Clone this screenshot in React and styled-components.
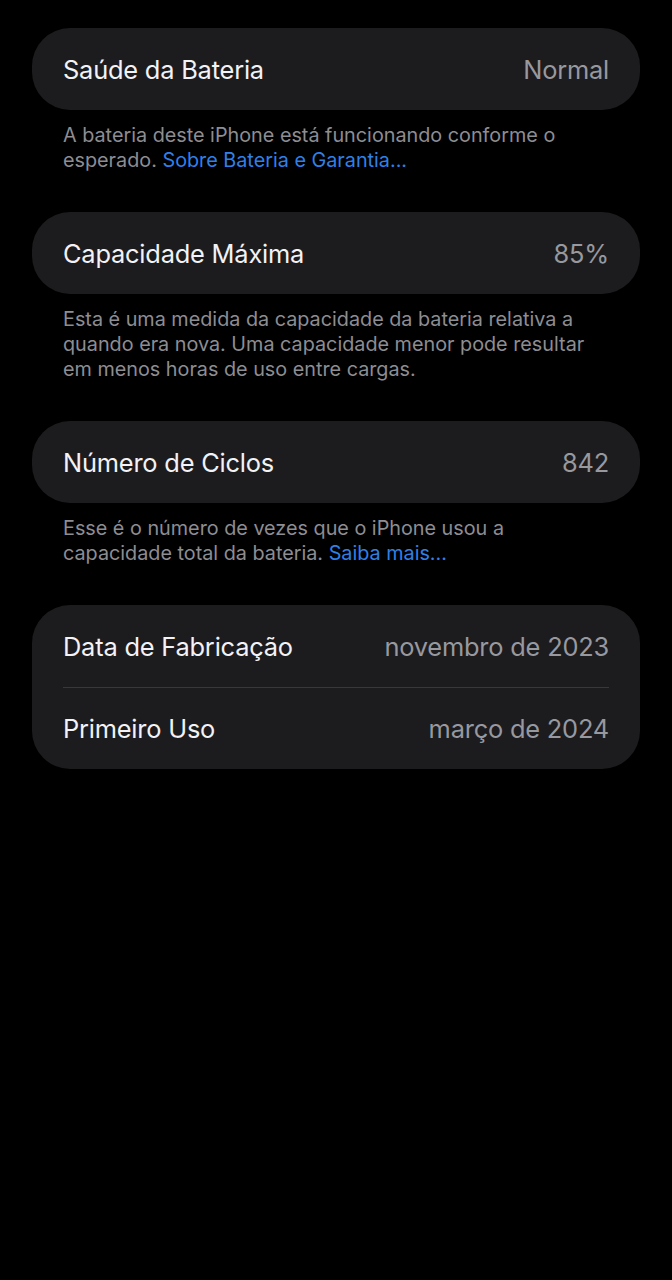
import React from "react";
import styled, { createGlobalStyle } from "styled-components";

const GlobalStyle = createGlobalStyle`
  html, body {
    margin: 0;
    padding: 0;
    background: #000;
  }
  body {
    font-family: Inter, Roboto, "Liberation Sans", sans-serif;
    -webkit-font-smoothing: antialiased;
  }
`;

const Page = styled.div`
  min-height: 1280px;
  background: #000;
  padding: 28px 32px 0;
  box-sizing: border-box;
`;

const Section = styled.section`
  margin-bottom: 39px;
`;

const Card = styled.div`
  background: #1c1c1e;
  border-radius: 38px;
  padding: 0 31px;
`;

const Row = styled.div`
  height: 82px;
  display: flex;
  align-items: center;
  justify-content: space-between;
  border-top: ${(p) => (p.$divided ? "1px solid #38383a" : "none")};
  box-sizing: border-box;
`;

const Label = styled.span`
  color: #f2f2f7;
  font-size: 25.4px;
  letter-spacing: -0.2px;
`;

const Value = styled.span`
  color: #98989f;
  font-size: 25.4px;
  letter-spacing: -0.2px;
`;

const Footer = styled.p`
  margin: 13px 0 0;
  padding: 0 31px;
  color: #8d8d93;
  font-size: 19.8px;
  line-height: 25px;
  letter-spacing: 0;
`;

const Link = styled.a`
  color: #2f80e8;
  text-decoration: none;
`;

export default function App() {
  return (
    <>
      <GlobalStyle />
      <Page>
        <Section>
          <Card>
            <Row>
              <Label>Saúde da Bateria</Label>
              <Value>Normal</Value>
            </Row>
          </Card>
          <Footer>
            A bateria deste iPhone está funcionando conforme o esperado.{" "}
            <Link>Sobre Bateria e Garantia...</Link>
          </Footer>
        </Section>
        <Section>
          <Card>
            <Row>
              <Label>Capacidade Máxima</Label>
              <Value>85%</Value>
            </Row>
          </Card>
          <Footer>
            Esta é uma medida da capacidade da bateria relativa a quando era
            nova. Uma capacidade menor pode resultar em menos horas de uso
            entre cargas.
          </Footer>
        </Section>
        <Section>
          <Card>
            <Row>
              <Label>Número de Ciclos</Label>
              <Value>842</Value>
            </Row>
          </Card>
          <Footer>
            Esse é o número de vezes que o iPhone usou a capacidade total da
            bateria. <Link>Saiba mais...</Link>
          </Footer>
        </Section>
        <Section>
          <Card>
            <Row>
              <Label>Data de Fabricação</Label>
              <Value>novembro de 2023</Value>
            </Row>
            <Row $divided>
              <Label>Primeiro Uso</Label>
              <Value>março de 2024</Value>
            </Row>
          </Card>
        </Section>
      </Page>
    </>
  );
}
